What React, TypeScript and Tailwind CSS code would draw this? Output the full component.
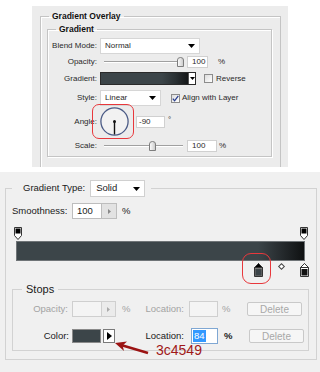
import React from "react";

function Caret() {
  return (
    <svg width="7" height="4" viewBox="0 0 7 4">
      <path d="M0 0H7L3.5 4Z" fill="#000" />
    </svg>
  );
}

function Thumb() {
  return (
    <svg width="7" height="10" viewBox="0 0 7 10">
      <defs>
        <linearGradient id="thg" x1="0" y1="0" x2="1" y2="0">
          <stop offset="0" stopColor="#ffffff" />
          <stop offset="1" stopColor="#c9c9c9" />
        </linearGradient>
      </defs>
      <path d="M0.5 3 Q0.5 0.5 3.5 0.5 Q6.5 0.5 6.5 3 V9.5 H0.5 Z" fill="url(#thg)" stroke="#7d7d7d" />
    </svg>
  );
}

function Track({ thumbClass }: { thumbClass: string }) {
  return (
    <div className="relative w-[79px] h-[12px] ml-[7px]">
      <div className="absolute left-0 right-0 top-[5px] h-[2px] border-t border-[#a0a0a0] bg-white" />
      <div className={"absolute top-[1px] " + thumbClass}>
        <Thumb />
      </div>
    </div>
  );
}

function TopStop() {
  return (
    <svg width="8" height="13" viewBox="0 0 8 13">
      <path d="M0.5 0.5H7.5V8.5L4 12.5L0.5 8.5Z" fill="#fff" stroke="#333" />
      <rect x="1.5" y="1.5" width="5" height="5" fill="#000" />
    </svg>
  );
}

function BottomStop({ selected, color }: { selected: boolean; color: string }) {
  return (
    <svg width="9" height="14" viewBox="0 0 9 14">
      <path d="M4.5 0.5L8.5 4.5V13.5H0.5V4.5Z" fill={selected ? "#8a8a8a" : "#fff"} stroke="#333" />
      <path d="M4.5 0.5L8.5 4.5H0.5Z" fill={selected ? "#000" : "#fff"} stroke="#333" />
      <rect x="1.5" y="6" width="6" height="6.5" fill={color} stroke={selected ? "#555" : "none"} strokeWidth="0.5" />
    </svg>
  );
}

export default function App() {
  const sans = "font-['Liberation_Sans',Arial,sans-serif]";
  return (
    <div className={"w-[320px] h-[372px] bg-white flex flex-col overflow-hidden " + sans}>
      {/* Top: Photoshop layer style panel */}
      <div className="mt-[6px] mx-[32px] h-[161px] shrink-0 bg-[#ececec] flex flex-col pt-[4px] text-[8px] text-[#2a2a2a]">
        <fieldset className="flex-1 min-w-0 ml-[8px] mr-[7px] border border-b-0 border-[#c4c4c4] pl-[6px] pr-[8px] pt-[1px] shadow-[inset_1px_1px_0_#fff]">
          <legend className="ml-[2px] px-[3px] font-bold leading-[12px] text-[8.5px] text-[#111]">Gradient Overlay</legend>
          <fieldset className="min-w-0 border border-[#c4c4c4] pb-[4px] shadow-[inset_1px_1px_0_#fff,1px_1px_0_#fff]">
            <legend className="ml-[8px] px-[3px] font-bold leading-[12px] text-[8.5px] text-[#111]">Gradient</legend>

            {/* Blend mode */}
            <div className="mt-[3px] h-[16px] flex items-center">
              <div className="w-[49px] text-right">Blend Mode:</div>
              <div className="ml-[3px] w-[100px] h-[16px] bg-white border border-[#d6d6d6] flex items-center justify-between pl-[4px] pr-[4px]">
                <span>Normal</span>
                <Caret />
              </div>
            </div>

            {/* Opacity */}
            <div className="mt-[2px] h-[12px] flex items-center">
              <div className="w-[49px] text-right">Opacity:</div>
              <Track thumbClass="left-[73px]" />
              <div className="ml-[4px] w-[21px] h-[12px] bg-white border border-[#d0d0d0] pl-[4px] leading-[10px]">100</div>
              <div className="ml-[10px]">%</div>
            </div>

            {/* Gradient */}
            <div className="mt-[4px] h-[13px] flex items-center">
              <div className="w-[49px] text-right">Gradient:</div>
              <div className="ml-[3px] w-[96px] h-[13px] border border-[#2a2a2a] flex">
                <div className="flex-1 bg-[linear-gradient(to_right,#3c4549_0%,#3c4549_70%,#2a3033_86%,#141617_100%)]" />
                <div className="w-[7px] bg-white border-l border-[#555] flex items-center justify-center">
                  <svg width="5" height="3" viewBox="0 0 5 3">
                    <path d="M0 0H5L2.5 3Z" fill="#000" />
                  </svg>
                </div>
              </div>
              <div className="ml-[8px] w-[9px] h-[9px] border border-[#8c8c8c] bg-[linear-gradient(135deg,#dcdcdc,#ffffff)]" />
              <div className="ml-[3px]">Reverse</div>
            </div>

            {/* Style */}
            <div className="mt-[5px] h-[16px] flex items-center">
              <div className="w-[49px] text-right">Style:</div>
              <div className="ml-[3px] w-[61px] h-[16px] bg-white border border-[#d6d6d6] flex items-center justify-between pl-[4px] pr-[4px]">
                <span>Linear</span>
                <Caret />
              </div>
              <div className="ml-[10px] w-[9px] h-[9px] border border-[#8c8c8c] bg-[linear-gradient(135deg,#dcdcdc,#ffffff)] flex items-center justify-center">
                <svg width="7" height="7" viewBox="0 0 7 7">
                  <path d="M0.8 3.6L2.6 5.8L6.3 0.8" fill="none" stroke="#2a3f8f" strokeWidth="1.3" />
                </svg>
              </div>
              <div className="ml-[2px]">Align with Layer</div>
            </div>

            {/* Angle */}
            <div className="-mt-[2px] h-[35px] flex items-center relative">
              <div className="w-[49px] text-right">Angle:</div>
              <div className="ml-[3px] w-[29px] h-[29px]">
                <svg width="29" height="29" viewBox="0 0 29 29">
                  <circle cx="14.5" cy="14.5" r="13.6" fill="#f2f2f2" stroke="#4b5b86" strokeWidth="1.3" />
                  <line x1="14.5" y1="14.5" x2="14.5" y2="27.5" stroke="#111" strokeWidth="1.4" />
                  <circle cx="14.5" cy="14.5" r="1.5" fill="#111" />
                </svg>
              </div>
              <div className="ml-[7px] w-[29px] h-[12px] bg-white border border-[#d0d0d0] pl-[2px] leading-[10px]">-90</div>
              <div className="ml-[3px] self-start mt-[12px] leading-[8px]">°</div>
              <div className="absolute left-[44px] top-0 w-[42px] h-[35px] border-[1.5px] border-[#e8383c] rounded-[7px]" />
            </div>

            {/* Scale */}
            <div className="mt-[1px] h-[12px] flex items-center">
              <div className="w-[49px] text-right">Scale:</div>
              <Track thumbClass="left-[45px]" />
              <div className="ml-[4px] w-[30px] h-[12px] bg-white border border-[#d0d0d0] pl-[4px] leading-[10px]">100</div>
              <div className="ml-[2px]">%</div>
            </div>
          </fieldset>
        </fieldset>
      </div>

      {/* Bottom: Gradient editor */}
      <div className="mt-[5px] h-[200px] shrink-0 bg-[#f0f0f0] pt-[8px] text-[9.5px] text-[#1a1a1a] relative">
        <fieldset className="min-w-0 ml-[5px] mr-[3px] border border-[#d2d2d2] pl-[6px] pr-[7px] pb-[8px]">
          <legend className="pl-[11px] pr-[6px]">
            <div className="h-[17px] flex items-center">
              <span>Gradient Type:</span>
              <div className="ml-[5px] w-[55px] h-[17px] bg-white border border-[#d0d0d0] flex items-center justify-between pl-[5px] pr-[4px]">
                <span>Solid</span>
                <Caret />
              </div>
            </div>
          </legend>

          {/* Smoothness */}
          <div className="mt-[6px] h-[16px] flex items-center">
            <div className="w-[60px]">Smoothness:</div>
            <div className="w-[30px] h-[16px] bg-white border border-[#bdbdbd] pl-[4px] flex items-center">100</div>
            <div className="w-[15px] h-[16px] bg-[#e2e2e2] border border-l-0 border-[#bdbdbd] flex items-center justify-center">
              <svg width="3" height="5" viewBox="0 0 3 5">
                <path d="M0 0L3 2.5L0 5Z" fill="#888" />
              </svg>
            </div>
            <div className="ml-[5px]">%</div>
          </div>

          {/* Gradient editor */}
          <div className="mt-[8px] ml-[4px] w-[289px] relative">
            <div className="h-[14px] relative">
              <div className="absolute left-[-2px] top-0">
                <TopStop />
              </div>
              <div className="absolute left-[284px] top-0">
                <TopStop />
              </div>
            </div>
            <div className="h-[20px] border border-[#6f7477] bg-[linear-gradient(to_right,#3c4549_0%,#3c4549_84%,#262b2e_92%,#0f1112_100%)]" />
            <div className="h-[16px] relative">
              <div className="absolute left-[238px] top-[2px]">
                <BottomStop selected={true} color="#3c4549" />
              </div>
              <div className="absolute left-[263px] top-[3px] w-[5px] h-[5px] rotate-45 border border-[#444] bg-white" />
              <div className="absolute left-[284px] top-[2px]">
                <BottomStop selected={false} color="#111" />
              </div>
            </div>
            <div className="absolute left-[226px] top-[26px] w-[29px] h-[31px] border-[1.5px] border-[#e8383c] rounded-[9px]" />
          </div>

          {/* Stops */}
          <fieldset className="min-w-0 mt-[5px] border border-[#d2d2d2] pb-[6px]">
            <legend className="ml-[9px] px-[4px] text-[11px] leading-[14px]">Stops</legend>

            <div className="mt-[5px] h-[16px] flex items-center text-[#a3a3a3]">
              <div className="w-[55px] text-right">Opacity:</div>
              <div className="ml-[4px] w-[30px] h-[16px] bg-[#f4f4f4] border border-[#cfcfcf]" />
              <div className="w-[14px] h-[16px] bg-[#ebebeb] border border-l-0 border-[#cfcfcf] flex items-center justify-center">
                <svg width="3" height="5" viewBox="0 0 3 5">
                  <path d="M0 0L3 2.5L0 5Z" fill="#aaa" />
                </svg>
              </div>
              <div className="ml-[6px] w-[16px]">%</div>
              <div className="w-[46px] text-right">Location:</div>
              <div className="ml-[5px] w-[29px] h-[16px] bg-[#f4f4f4] border border-[#cfcfcf]" />
              <div className="ml-[4px] w-[10px]">%</div>
              <div className="ml-[15px] w-[55px] h-[14px] bg-[#f6f6f6] border border-[#c9c9c9] rounded-[2px] flex items-center justify-center text-[10px] text-[#a8a8a8]">
                Delete
              </div>
            </div>

            <div className="mt-[11px] h-[16px] flex items-center">
              <div className="w-[56px] text-right">Color:</div>
              <div className="ml-[3px] w-[29px] h-[14px] bg-[#3c4549] border border-[#8a8a8a]" />
              <div className="ml-[2px] w-[12px] h-[14px] bg-white border border-[#7a7a7a] flex items-center justify-center">
                <svg width="5" height="8" viewBox="0 0 5 8">
                  <path d="M0 0L5 4L0 8Z" fill="#000" />
                </svg>
              </div>
              <div className="w-[23px]" />
              <div className="w-[46px] text-right">Location:</div>
              <div className="ml-[7px] w-[27px] h-[16px] bg-white border border-[#7fa7d3] flex items-center pl-[1px]">
                <span className="bg-[#3399ff] text-white px-[1px] leading-[12px]">84</span>
              </div>
              <div className="ml-[6px] w-[10px] font-bold">%</div>
              <div className="ml-[15px] w-[55px] h-[14px] bg-[#f6f6f6] border border-[#c9c9c9] rounded-[2px] flex items-center justify-center text-[10px] text-[#a8a8a8]">
                Delete
              </div>
            </div>
          </fieldset>
        </fieldset>

        {/* Annotation */}
        <svg className="absolute left-[110px] top-[162px]" width="40" height="22" viewBox="0 0 40 22">
          <line x1="11" y1="10.9" x2="38" y2="19" stroke="#9b1313" strokeWidth="2.6" />
          <path d="M5 9 L17 7.5 L12.6 11.4 L14 17.1 Z" fill="#9b1313" />
        </svg>
        <div className="absolute left-[156px] top-[170px] text-[14px] leading-[16px] text-[#a01818]">3c4549</div>
      </div>
    </div>
  );
}
